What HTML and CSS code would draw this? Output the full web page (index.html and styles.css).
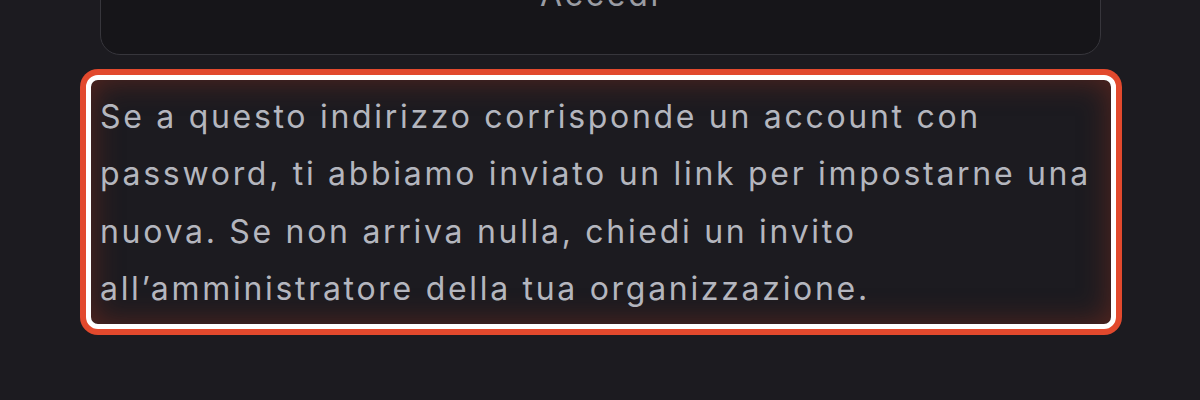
FILE: index.html
```html
<!DOCTYPE html>
<html lang="it">
<head>
<meta charset="utf-8">
<title>Accedi</title>
<link rel="stylesheet" href="styles.css">
</head>
<body>
  <main class="page">
    <div class="form">
      <button class="btn" type="button">Accedi</button>
      <p class="notice">Se a questo indirizzo corrisponde un account con password, ti abbiamo inviato un link per impostarne una nuova. Se non arriva nulla, chiedi un invito all’amministratore della tua organizzazione.</p>
    </div>
  </main>
</body>
</html>
```

FILE: styles.css
```css
html, body {
  margin: 0;
  padding: 0;
  background: #1c1b20;
}

body {
  font-family: Inter, "Noto Sans", "Liberation Sans", sans-serif;
  color: #b4b6be;
  height: 400px;
  overflow: hidden;
}

.page {
  margin-top: -63px;
  padding: 0 99px 0 100px;
}

.form {
  width: 1001px;
  display: flex;
  flex-direction: column;
}

.btn {
  display: block;
  width: 100%;
  box-sizing: border-box;
  padding: 28px 0 30px;
  font-family: inherit;
  font-size: 32px;
  line-height: 1.8;
  letter-spacing: 2.7px;
  color: #9a9ca3;
  background: #161519;
  border: 1px solid #37363c;
  border-radius: 20px;
}

.notice {
  margin: 20px -15px 0 -14px;
  padding: 8px 10px 6px 9px;
  font-size: 32px;
  line-height: 1.8;
  letter-spacing: 2.7px;
  color: #b4b6be;
  background: #1c1b20;
  border: 5px solid #ffffff;
  border-radius: 12px;
  box-shadow: 0 0 0 6px #e2492d, inset 0 0 30px rgba(130, 45, 30, 0.6);
}
```
